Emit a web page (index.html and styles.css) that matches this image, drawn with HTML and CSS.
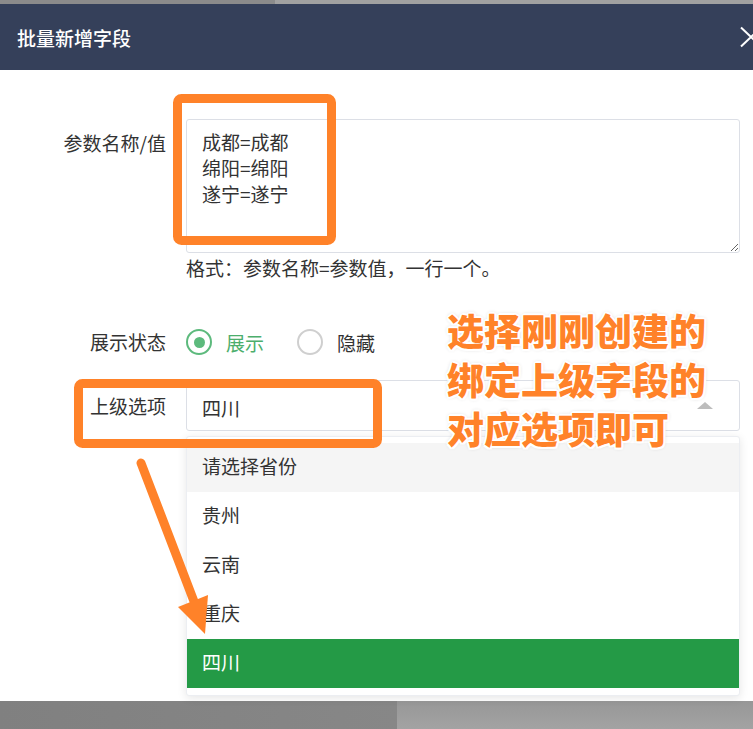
FILE: index.html
```html
<!DOCTYPE html>
<html lang="zh-CN">
<head>
<meta charset="utf-8">
<title>批量新增字段</title>
<link rel="stylesheet" href="styles.css">
</head>
<body>
<div class="page">
  <div class="backdrop-top"><div class="bt-left"></div><div class="bt-right"></div></div>
  <div class="dialog">
    <div class="dialog-header">
      <span class="title">批量新增字段</span>
      <svg class="close" width="22" height="22" viewBox="0 0 22 22"><path d="M1 1.5 L21 20.5 M21 1.5 L1 20.5" stroke="#fff" stroke-width="2" fill="none"/></svg>
    </div>
    <div class="dialog-body">
      <div class="form-row row-textarea">
        <label class="form-label label-top">参数名称/值</label>
        <div class="form-control">
          <textarea class="textarea">成都=成都
绵阳=绵阳
遂宁=遂宁</textarea>
          <div class="help">格式：参数名称=参数值，一行一个。</div>
        </div>
      </div>
      <div class="form-row row-radio">
        <label class="form-label label-mid">展示状态</label>
        <div class="form-control radios">
          <span class="radio checked"><span class="radio-circle"><span class="radio-dot"></span></span><span class="radio-text">展示</span></span>
          <span class="radio"><span class="radio-circle"></span><span class="radio-text">隐藏</span></span>
        </div>
      </div>
      <div class="form-row row-select">
        <label class="form-label label-select">上级选项</label>
        <div class="form-control select-wrap">
          <div class="select"><span class="select-value">四川</span><span class="caret"></span></div>
          <ul class="dropdown">
            <li class="option hover">请选择省份</li>
            <li class="option">贵州</li>
            <li class="option">云南</li>
            <li class="option">重庆</li>
            <li class="option selected">四川</li>
          </ul>
        </div>
      </div>
    </div>
  </div>
  <div class="backdrop-bottom"><div class="bb-left"></div><div class="bb-right"></div></div>

  <svg class="marks" width="753" height="729" viewBox="0 0 753 729">
    <rect x="177.5" y="98.5" width="154" height="142" rx="4" fill="none" stroke="#ff8229" stroke-width="9"/>
    <rect x="78.5" y="383.5" width="299" height="60" rx="4" fill="none" stroke="#ff8229" stroke-width="9"/>
    <line x1="141" y1="463" x2="195" y2="604" stroke="#ff8229" stroke-width="9" stroke-linecap="round"/>
    <polygon points="178,607 208,595 205,634" fill="#ff8229"/>
  </svg>
  <div class="annotation">选择刚刚创建的<br>绑定上级字段的<br>对应选项即可</div>
</div>
</body>
</html>
```

FILE: styles.css
```css
* { box-sizing: border-box; }
html, body {
  margin: 0;
  padding: 0;
  width: 753px;
  height: 729px;
  overflow: hidden;
  background: #fff;
  font-family: "Noto Sans CJK SC", "Noto Sans", sans-serif;
  color: #333;
}
.page {
  position: relative;
  width: 753px;
  height: 729px;
  overflow: hidden;
}
.backdrop-top {
  height: 4px;
  display: flex;
}
.bt-left { width: 275px; background: #8b8b8b; }
.bt-right { flex: 1; background: #a1a1a1; }

.dialog {
  width: 775px;
  height: 697px;
  background: #fff;
  display: flex;
  flex-direction: column;
}
.dialog-header {
  height: 66px;
  background: #35405a;
  display: flex;
  align-items: center;
  padding: 0 13px 0 17px;
}
.title {
  color: #fff;
  font-size: 19px;
  font-weight: 500;
  white-space: nowrap;
  margin-top: 1px;
}
.close { margin-left: auto; display: block; }

.dialog-body {
  flex: 1;
  padding: 49px 35px 0 0;
  display: flex;
  flex-direction: column;
}
.form-row {
  display: flex;
  gap: 20px;
}
.form-label {
  width: 166px;
  flex: none;
  text-align: right;
  font-size: 19px;
  color: #333;
}
.label-top { line-height: 25.5px; padding-top: 11px; }
.label-mid { line-height: 30px; }
.label-select { line-height: 51px; }
.form-control { flex: 1; min-width: 0; }

.textarea {
  display: block;
  width: 100%;
  height: 134px;
  border: 1px solid #dcdfe6;
  border-radius: 3px;
  padding: 9px 15px 10px;
  font-family: "Noto Sans CJK SC", "Noto Sans", sans-serif;
  font-size: 19px;
  line-height: 26px;
  color: #333;
  resize: vertical;
  outline: none;
}
.help {
  margin-top: 2px;
  font-size: 19px;
  line-height: 26px;
  color: #333;
}

.row-radio { margin-top: 46px; }
.radios {
  display: flex;
  align-items: center;
  gap: 33px;
  height: 30px;
}
.radio {
  display: inline-flex;
  align-items: center;
  gap: 14px;
  font-size: 19px;
  color: #333;
}
.radio-circle {
  width: 26px;
  height: 26px;
  border-radius: 50%;
  border: 2px solid #cfcfcf;
  display: flex;
  align-items: center;
  justify-content: center;
}
.radio.checked .radio-circle { border-color: #5dba7d; }
.radio-dot {
  width: 11px;
  height: 11px;
  border-radius: 50%;
  background: #5dba7d;
}
.radio.checked .radio-text { color: #4cae6c; }

.row-select { margin-top: 23px; }
.select-wrap { position: relative; }
.select {
  height: 51px;
  border: 1px solid #dcdfe6;
  border-radius: 3px;
  padding: 3px 15px 0;
  display: flex;
  align-items: center;
  font-size: 19px;
  color: #333;
}
.caret {
  margin-left: auto;
  margin-right: 11px;
  width: 0;
  height: 0;
  border-left: 8px solid transparent;
  border-right: 8px solid transparent;
  border-bottom: 7px solid #bdbdbd;
  margin-top: -3px;
}
.dropdown {
  position: absolute;
  top: 56px;
  left: 0;
  right: 0;
  margin: 0;
  padding: 6px 0 7px;
  list-style: none;
  background: #fff;
  border: 1px solid #eceef2;
  border-radius: 3px;
  box-shadow: 0 2px 10px rgba(0, 0, 0, 0.1);
}
.option {
  height: 49px;
  line-height: 45px;
  padding: 0 15px;
  font-size: 19px;
  color: #333;
}
.option.hover { background: #f5f5f5; }
.option.selected { background: #249a46; color: #fff; }

.backdrop-bottom {
  height: 28px;
  display: flex;
}
.bb-left { width: 397px; background: linear-gradient(90deg, #808080, #878787); }
.bb-right { flex: 1; background: linear-gradient(180deg, #979797, #a3a3a3); }

.marks {
  position: absolute;
  left: 0;
  top: 0;
  pointer-events: none;
}
.annotation {
  position: absolute;
  left: 447px;
  top: 306px;
  font-size: 37px;
  line-height: 49px;
  font-weight: 900;
  color: #ff8229;
  white-space: nowrap;
  text-shadow:
    2px 0 0 #fff, -2px 0 0 #fff, 0 2px 0 #fff, 0 -2px 0 #fff,
    1.5px 1.5px 0 #fff, -1.5px 1.5px 0 #fff, 1.5px -1.5px 0 #fff, -1.5px -1.5px 0 #fff,
    0 0 4px rgba(0, 0, 0, 0.3);
}
```
